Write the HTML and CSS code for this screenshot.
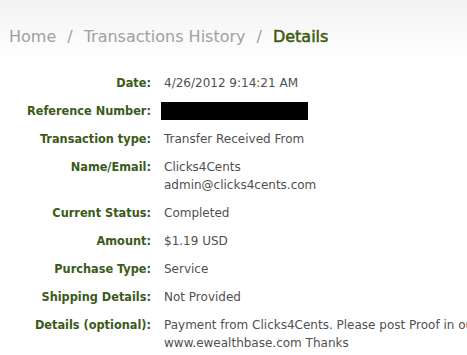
FILE: index.html
```html
<!DOCTYPE html>
<html>
<head>
<meta charset="utf-8">
<link rel="stylesheet" href="styles.css">
</head>
<body>
<div class="page">
  <nav class="crumbs">
    <span class="crumb">Home</span>
    <span class="sep">/</span>
    <span class="crumb">Transactions History</span>
    <span class="sep">/</span>
    <span class="crumb current">Details</span>
  </nav>
  <div class="details">
    <div class="label">Date:</div>
    <div class="value">4/26/2012 9:14:21 AM</div>
    <div class="label">Reference Number:</div>
    <div class="value"><span class="redacted"></span></div>
    <div class="label">Transaction type:</div>
    <div class="value">Transfer Received From</div>
    <div class="label">Name/Email:</div>
    <div class="value">Clicks4Cents<br>admin@clicks4cents.com</div>
    <div class="label">Current Status:</div>
    <div class="value">Completed</div>
    <div class="label">Amount:</div>
    <div class="value">$1.19 USD</div>
    <div class="label">Purchase Type:</div>
    <div class="value">Service</div>
    <div class="label">Shipping Details:</div>
    <div class="value">Not Provided</div>
    <div class="label">Details (optional):</div>
    <div class="value">Payment from Clicks4Cents. Please post Proof in our<br>www.ewealthbase.com Thanks</div>
  </div>
</div>
</body>
</html>
```
FILE: styles.css
```css
html, body {
  margin: 0;
  padding: 0;
}
body {
  background: linear-gradient(#f2f2f2 0px, #ffffff 60px, #ffffff 100%);
  font-family: "DejaVu Sans", Verdana, sans-serif;
  width: 467px;
  height: 355px;
  overflow: hidden;
}
.page {
  padding: 27px 0 0 9px;
}
.crumbs {
  font-size: 16px;
  line-height: 20px;
  color: #a0a0a0;
  display: flex;
  gap: 11px;
  white-space: nowrap;
}
.crumb.current {
  color: #3d5a0e;
  -webkit-text-stroke: 0.5px #3d5a0e;
}
.details {
  margin-top: 27px;
  display: grid;
  grid-template-columns: 142px 1fr;
  column-gap: 13px;
  row-gap: 10px;
  font-size: 12px;
  line-height: 18px;
}
.label {
  font-family: "DejaVu Sans Condensed", "DejaVu Sans", sans-serif;
  font-size: 12.6px;
  font-weight: bold;
  color: #3b5a1a;
  text-align: right;
  white-space: nowrap;
}
.value {
  color: #505050;
  white-space: nowrap;
}
.redacted {
  display: inline-block;
  vertical-align: top;
  width: 147px;
  height: 18px;
  margin-left: -3px;
  background: #000;
}
```
